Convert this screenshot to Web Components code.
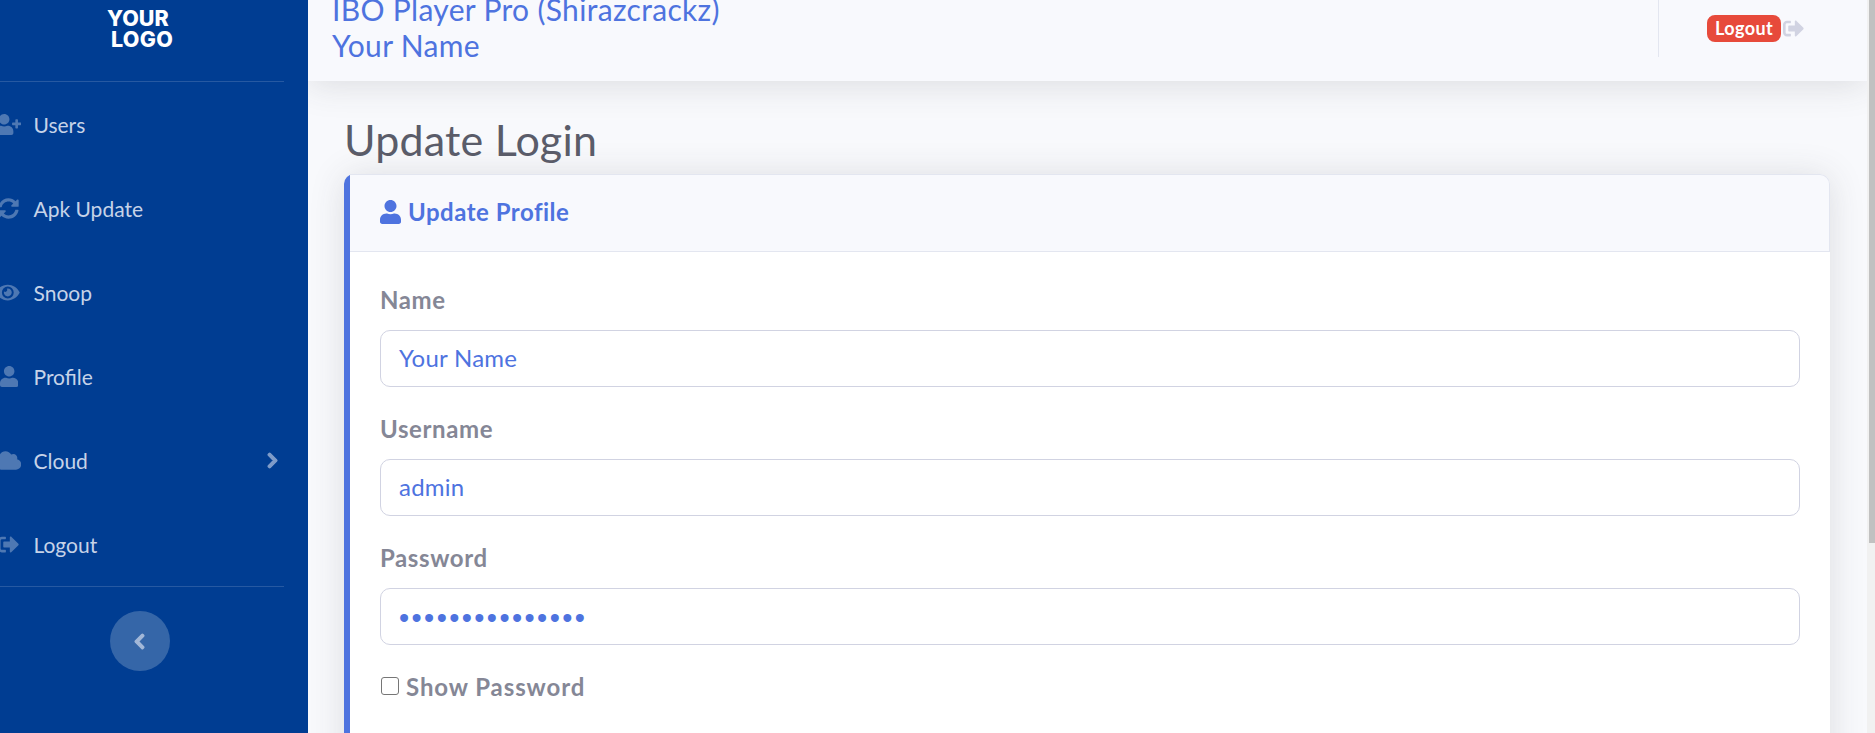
<!DOCTYPE html>
<html lang="en">
<head>
<meta charset="utf-8">
<title>Update Login</title>
<style>
  html, body { margin: 0; height: 100%; overflow: hidden; }
  body { font-family: Lato, "Open Sans", "Liberation Sans", sans-serif; }
</style>
</head>
<body>
<app-shell>
  <side-bar slot="side">
    <nav-item label="Users" icon="userPlus" shift="-5"></nav-item>
    <nav-item label="Apk Update" icon="sync" shift="-2"></nav-item>
    <nav-item label="Snoop" icon="eye" shift="-3.600"></nav-item>
    <nav-item label="Profile" icon="user" shift="0"></nav-item>
    <nav-item label="Cloud" icon="cloud" shift="-5" arrow></nav-item>
    <nav-item label="Logout" icon="logout" shift="-2"></nav-item>
  </side-bar>
  <top-bar slot="top"></top-bar>
  <page-title>Update Login</page-title>
  <profile-card>
    <form-field label="Name" value="Your Name"></form-field>
    <form-field label="Username" value="admin"></form-field>
    <form-field label="Password" value="•••••••••••••••" dots></form-field>
    <show-check>Show Password</show-check>
  </profile-card>
</app-shell>

<script>
const svg = (w, h, d) => `<svg viewBox="0 0 ${w} ${h}"><path d="${d}"/></svg>`;
const USER = 'M224 256c70.700 0 128-57.300 128-128S294.700 0 224 0 96 57.300 96 128s57.300 128 128 128zm89.600 32h-16.700c-22.200 10.200-46.900 16-72.900 16s-50.600-5.800-72.900-16h-16.700C60.200 288 0 348.200 0 422.400V464c0 26.500 21.500 48 48 48h352c26.500 0 48-21.500 48-48v-41.600c0-74.200-60.200-134.400-134.400-134.400z';
const ICONS = {
  userPlus: svg(640, 512, 'M624 208h-64v-64c0-8.800-7.200-16-16-16h-32c-8.800 0-16 7.200-16 16v64h-64c-8.800 0-16 7.200-16 16v32c0 8.800 7.200 16 16 16h64v64c0 8.800 7.200 16 16 16h32c8.800 0 16-7.200 16-16v-64h64c8.800 0 16-7.200 16-16v-32c0-8.800-7.200-16-16-16z' + USER),
  sync: svg(512, 512, 'M370.720 133.280C339.458 104.008 298.888 87.962 255.848 88c-77.458.068-144.328 53.178-162.791 126.850-1.344 5.363-6.122 9.150-11.651 9.150H24.103c-7.498 0-13.194-6.807-11.807-14.176C33.933 94.924 134.813 8 256 8c66.448 0 126.791 26.136 171.315 68.685L463.030 40.970C478.149 25.851 504 36.559 504 57.941V192c0 13.255-10.745 24-24 24H345.941c-21.382 0-32.090-25.851-16.971-40.971l41.750-41.749zM32 296h134.059c21.382 0 32.090 25.851 16.971 40.971l-41.750 41.750c31.262 29.273 71.835 45.319 114.876 45.280 77.418-.070 144.315-53.144 162.787-126.849 1.344-5.363 6.122-9.150 11.651-9.150h57.304c7.498 0 13.194 6.807 11.807 14.176C478.067 417.076 377.187 504 256 504c-66.448 0-126.791-26.136-171.315-68.685L48.970 471.030C33.851 486.149 8 475.441 8 454.059V320c0-13.255 10.745-24 24-24z'),
  eye: svg(576, 512, 'M572.520 241.400C518.290 135.590 410.930 64 288 64S57.680 135.640 3.480 241.410a32.350 32.350 0 0 0 0 29.190C57.710 376.410 165.070 448 288 448s230.320-71.640 284.520-177.410a32.350 32.350 0 0 0 0-29.190zM288 400a144 144 0 1 1 144-144 143.930 143.930 0 0 1-144 144zm0-240a95.310 95.310 0 0 0-25.310 3.790 47.850 47.850 0 0 1-66.900 66.900A95.780 95.780 0 1 0 288 160z'),
  user: svg(448, 512, USER),
  cloud: svg(640, 512, 'M537.600 226.600c4.100-10.700 6.400-22.400 6.400-34.600 0-53-43-96-96-96-19.700 0-38.100 6-53.300 16.200C367 64.200 315.300 32 256 32c-88.400 0-160 71.600-160 160 0 2.700.1 5.400.2 8.100C40.200 219.800 0 273.200 0 336c0 79.500 64.500 144 144 144h368c70.700 0 128-57.300 128-128 0-61.900-44-113.600-102.400-125.400z'),
  logout: svg(512, 512, 'M497 273L329 441c-15 15-41 4.500-41-17v-96H152c-13.300 0-24-10.700-24-24v-96c0-13.300 10.700-24 24-24h136V88c0-21.400 25.900-32 41-17l168 168c9.300 9.400 9.300 24.600 0 34zM192 436v-40c0-6.600-5.400-12-12-12H96c-17.700 0-32-14.300-32-32V160c0-17.700 14.300-32 32-32h84c6.600 0 12-5.400 12-12V76c0-6.600-5.400-12-12-12H96c-53 0-96 43-96 96v192c0 53 43 96 96 96h84c6.600 0 12-5.400 12-12z'),
  chevronRight: svg(320, 512, 'M285.476 272.971L91.132 467.314c-9.373 9.373-24.569 9.373-33.941 0l-22.667-22.667c-9.357-9.357-9.375-24.522-.04-33.901L188.505 256 34.484 101.255c-9.335-9.379-9.317-24.544.04-33.901l22.667-22.667c9.373-9.373 24.569-9.373 33.941 0L285.475 239.030c9.373 9.372 9.373 24.568.001 33.941z'),
  chevronLeft: svg(320, 512, 'M34.520 239.030L228.870 44.690c9.370-9.370 24.570-9.370 33.940 0l22.670 22.670c9.360 9.360 9.370 24.520.040 33.900L131.490 256l154.020 154.750c9.340 9.380 9.320 24.540-.040 33.900l-22.670 22.670c-9.370 9.370-24.570 9.370-33.940 0L34.520 272.970c-9.370-9.370-9.370-24.570 0-33.940z')
};

class AppShell extends HTMLElement {
  constructor() {
    super();
    this.attachShadow({ mode: 'open' });
    this.shadowRoot.innerHTML = `
      <style>
        :host { display: grid; grid-template-columns: 308px 1fr 8px; height: 733px; background: #f8f9fc; overflow: hidden; }
        .main { min-width: 0; display: flex; flex-direction: column; overflow: hidden; }
        .content { flex: 1; min-height: 0; padding: 34px 37px 0 36px; }
        .bar { background: #f1f1f1; }
        .thumb { height: 543px; margin-left: 2px; background: #c1c1c1; }
      </style>
      <slot name="side"></slot>
      <div class="main">
        <slot name="top"></slot>
        <div class="content"><slot></slot></div>
      </div>
      <div class="bar"><div class="thumb"></div></div>
    `;
  }
}

class SideBar extends HTMLElement {
  constructor() {
    super();
    this.attachShadow({ mode: 'open' });
    this.shadowRoot.innerHTML = `
      <style>
        :host { display: block; height: 733px; background: #003d92; overflow: hidden; }
        .brand { height: 81px; box-sizing: border-box; padding: 8px 0 0 107px; font: 800 21.500px/20.500px Inter, "Liberation Sans", sans-serif; color: #fff; }
        .brand span { display: block; }
        .brand span + span { margin-left: 4px; letter-spacing: .3px; }
        hr { border: 0; border-top: 1px solid rgba(255,255,255,.15); margin: 0 24px 0 0; }
        .toggle { width: 60px; height: 60px; border-radius: 50%; background: #3566a8; margin: 24px 0 0 110px; display: flex; align-items: center; justify-content: center; }
        .toggle svg { height: 17px; width: 11px; fill: #a3b8d8; stroke: #a3b8d8; stroke-width: 40; overflow: visible; margin-left: -2px; }
      </style>
      <div class="brand"><span>YOUR</span><span>LOGO</span></div>
      <hr>
      <slot></slot>
      <hr>
      <div class="toggle">${ICONS.chevronLeft}</div>
    `;
  }
}

class NavItem extends HTMLElement {
  constructor() {
    super();
    this.attachShadow({ mode: 'open' });
  }

  connectedCallback() {
    const icon = ICONS[this.getAttribute('icon')];
    const shift = this.getAttribute('shift');
    const arrow = this.hasAttribute('arrow') ? `<span class="arrow">${ICONS.chevronRight}</span>` : '';
    this.shadowRoot.innerHTML = `
      <style>
        :host { display: block; height: 84px; }
        .row { height: 84px; display: flex; align-items: center; font-size: 21px; color: #c6d3e8; }
        .ico { width: 33.500px; flex: none; display: flex; }
        .ico svg { height: 21px; flex: none; fill: #4e78b3; margin-left: ${shift}px; }
        .arrow { margin-left: auto; margin-right: 30px; display: flex; }
        .arrow svg { height: 17px; width: 11px; fill: #7f9cc9; stroke: #7f9cc9; stroke-width: 40; overflow: visible; }
      </style>
      <div class="row"><span class="ico">${icon}</span><span>${this.getAttribute('label')}</span>${arrow}</div>
    `;
  }
}

class TopBar extends HTMLElement {
  constructor() {
    super();
    this.attachShadow({ mode: 'open' });
    this.shadowRoot.innerHTML = `
      <style>
        :host { display: flex; flex: none; height: 81px; background: #f8f9fd; box-shadow: 0 4px 35px rgba(58,59,69,.15); position: relative; z-index: 1; align-items: flex-start; }
        .titles { flex: 1; margin: -9px 0 0 24px; font-size: 30px; line-height: 36px; letter-spacing: .32px; color: #4e73df; }
        .user { width: 209px; height: 57px; border-left: 1px solid #e3e6f0; display: flex; align-items: flex-start; padding: 15px 0 0 48px; box-sizing: border-box; }
        .badge { background: #e74a3b; color: #fff; font-weight: 700; font-size: 18px; letter-spacing: .4px; line-height: 27px; height: 27px; padding: 0 8px; border-radius: 8px; }
        svg { width: 21px; height: 21px; fill: #d1d3e2; margin: 3px 0 0 2px; }
      </style>
      <div class="titles">IBO Player Pro (Shirazcrackz)<br>Your Name</div>
      <div class="user"><span class="badge">Logout</span>${ICONS.logout}</div>
    `;
  }
}

class PageTitle extends HTMLElement {
  constructor() {
    super();
    this.attachShadow({ mode: 'open' });
    this.shadowRoot.innerHTML = `
      <style>
        :host { display: block; font-size: 43px; line-height: 52px; letter-spacing: .2px; color: #5a5c69; margin-top: -1px; }
      </style>
      <slot></slot>
    `;
  }
}

class ProfileCard extends HTMLElement {
  constructor() {
    super();
    this.attachShadow({ mode: 'open' });
    this.shadowRoot.innerHTML = `
      <style>
        :host { display: block; margin-top: 8px; background: #fff; border-left: 6px solid #4e73df; border-radius: 10px; box-shadow: 0 2px 35px rgba(58,59,69,.15); height: 640px; }
        .head { height: 78px; box-sizing: border-box; background: #f8f9fd; border: 1px solid #e3e6f0; border-left: 0; border-radius: 0 10px 0 0; display: flex; align-items: center; padding-left: 30px; gap: 7px; color: #4e73df; font-weight: 700; font-size: 24px; letter-spacing: .5px; }
        .head svg { width: 21px; height: 24px; fill: #4e73df; margin-top: -3px; }
        .head span { margin-top: -3px; }
        .body { padding: 30px 30px 0; }
      </style>
      <div class="head">${ICONS.user}<span>Update Profile</span></div>
      <div class="body"><slot></slot></div>
    `;
  }
}

class FormField extends HTMLElement {
  constructor() {
    super();
    this.attachShadow({ mode: 'open' });
  }

  connectedCallback() {
    const dots = this.hasAttribute('dots');
    this.shadowRoot.innerHTML = `
      <style>
        :host { display: block; margin-bottom: 24px; }
        label { display: block; font-weight: 700; font-size: 24px; letter-spacing: .6px; line-height: 36px; color: #858796; margin-bottom: 12px; }
        .input { height: 57px; box-sizing: border-box; border: 1px solid #d1d3e2; border-radius: 10px; padding: 0 18px 2px; display: flex; align-items: center; font-size: 24px; letter-spacing: .25px; color: #4e73df; background: #fff; }
        .dots { font-family: "Liberation Sans", sans-serif; font-size: 29px; letter-spacing: 2.400px; padding-top: 4px; padding-bottom: 0; }
      </style>
      <label>${this.getAttribute('label')}</label>
      <div class="input ${dots ? 'dots' : ''}">${this.getAttribute('value')}</div>
    `;
  }
}

class ShowCheck extends HTMLElement {
  constructor() {
    super();
    this.attachShadow({ mode: 'open' });
    this.shadowRoot.innerHTML = `
      <style>
        :host { display: flex; align-items: center; gap: 7px; font-weight: 700; font-size: 24px; letter-spacing: .9px; line-height: 36px; color: #858796; padding-left: 1px; }
        .box { width: 18px; height: 18px; border: 1.500px solid #767676; border-radius: 3px; box-sizing: border-box; background: #fff; margin-top: -2px; }
      </style>
      <span class="box"></span><slot></slot>
    `;
  }
}

customElements.define('app-shell', AppShell);
customElements.define('side-bar', SideBar);
customElements.define('nav-item', NavItem);
customElements.define('top-bar', TopBar);
customElements.define('page-title', PageTitle);
customElements.define('profile-card', ProfileCard);
customElements.define('form-field', FormField);
customElements.define('show-check', ShowCheck);
</script>
</body>
</html>
